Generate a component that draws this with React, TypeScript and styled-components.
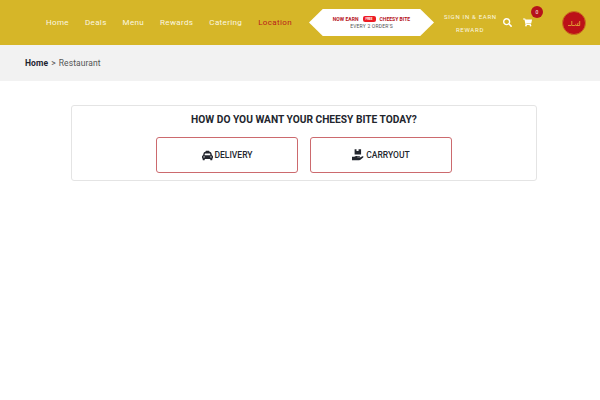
import { createGlobalStyle, styled } from 'styled-components';
import { FaSearch, FaShoppingCart, FaTaxi } from 'react-icons/fa';

const GlobalStyle = createGlobalStyle`
	html, body {
		margin: 0;
		padding: 0;
		background: #fff;
		font-family: Roboto, 'Liberation Sans', sans-serif;
	}
`;

const Page = styled.div`
	width: 600px;
	height: 400px;
	overflow: hidden;
`;

const Header = styled.header`
	display: flex;
	align-items: center;
	height: 45px;
	padding: 0 14px 0 46px;
	box-sizing: border-box;
	background: #d6b628;
`;

const Nav = styled.nav`
	display: flex;
	gap: 16px;
	width: 263px;
`;

const NavLink = styled.a<{ $active?: boolean }>`
	font-size: 8px;
	line-height: 12px;
	font-weight: 400;
	letter-spacing: 0.35px;
	white-space: nowrap;
	color: ${(p) => (p.$active ? '#b91c1c' : '#fbf6e0')};
`;

const Promo = styled.div`
	display: flex;
	flex-direction: column;
	align-items: center;
	justify-content: center;
	width: 125px;
	height: 27px;
	flex-shrink: 0;
	background: #fff;
	clip-path: polygon(0 50%, 11% 0, 89% 0, 100% 50%, 89% 100%, 11% 100%);
`;

const PromoTop = styled.div`
	display: flex;
	align-items: center;
	gap: 3px;
	font-size: 5px;
	line-height: 8px;
	font-weight: 700;
	letter-spacing: 0.03px;
	color: #b5121b;
	white-space: nowrap;
`;

const FreeTag = styled.span`
	display: inline-block;
	width: 13px;
	height: 6px;
	line-height: 6px;
	font-size: 3px;
	text-align: center;
	color: #fff;
	background: #ed1c24;
	border-radius: 2px;
	margin: 0 1px;
`;

const PromoBottom = styled.div`
	font-size: 5px;
	line-height: 7px;
	letter-spacing: 0.2px;
	color: #555;
`;

const SignIn = styled.a`
	width: 52px;
	margin-left: 10px;
	flex-shrink: 0;
	font-size: 6px;
	line-height: 13px;
	font-weight: 400;
	letter-spacing: 0.7px;
	text-align: center;
	white-space: nowrap;
	color: #fbf6e0;
`;

const IconButton = styled.span<{ $left: number }>`
	position: relative;
	display: flex;
	margin-left: ${(p) => p.$left}px;
	color: #fff;
	font-size: 9px;
`;

const Badge = styled.span`
	position: absolute;
	top: -12px;
	left: 8px;
	width: 12px;
	height: 12px;
	border-radius: 50%;
	background: #b5121b;
	color: #f5d5d5;
	font-size: 5px;
	font-weight: 500;
	line-height: 12px;
	text-align: center;
`;

const Logo = styled.div`
	display: flex;
	align-items: center;
	justify-content: center;
	width: 24px;
	height: 24px;
	margin-left: auto;
	box-sizing: border-box;
	border-radius: 50%;
	background: #bc1118;
	border: 1px solid #c9761f;
	color: #e8b93a;
`;

const Breadcrumb = styled.div`
	display: flex;
	align-items: center;
	gap: 3px;
	height: 36px;
	padding-left: 25px;
	background: #f2f2f2;
	font-size: 8.5px;
	letter-spacing: 0.1px;
	color: #555;
`;

const Crumb = styled.a`
	font-weight: 700;
	color: #1f2430;
`;

const Main = styled.main`
	padding: 24px 63px 0 71px;
`;

const Card = styled.section`
	display: flex;
	flex-direction: column;
	align-items: center;
	height: 76px;
	box-sizing: border-box;
	padding-top: 7px;
	border: 1px solid #e4e4e4;
	border-radius: 3px;
`;

const Title = styled.h2`
	margin: 0 0 11px;
	font-size: 10.2px;
	line-height: 13px;
	font-weight: 700;
	color: #23262e;
`;

const Options = styled.div`
	display: flex;
	gap: 12px;
`;

const OptionButton = styled.button`
	display: flex;
	align-items: center;
	justify-content: center;
	gap: 2px;
	width: 142px;
	height: 36px;
	padding: 0;
	background: #fff;
	border: 1px solid #cc6a6e;
	border-radius: 3px;
	font-family: inherit;
	font-size: 8.5px;
	font-weight: 500;
	color: #23262e;
	svg {
		font-size: 11px;
	}
`;

const HandBoxIcon = () => (
	<svg width="12" height="12" viewBox="0.5 0.5 11.5 11" fill="currentColor">
		<path d="M3 0.5h1.8v1.6h2V0.5h2.4v5H3z" />
		<path d="M0.5 7.6h2.2c1-.7 2-.8 3-.5h2c.6 0 .7 1 0 1H5.6v.4h2.6l2.3-1.2c.8-.3 1.3.5.7 1L8.6 10.6c-.4.3-.8.4-1.2.4H0.5z" />
	</svg>
);

const HalalMark = () => (
	<svg width="14" height="8" viewBox="0 0 14 8" fill="none" stroke="currentColor" strokeWidth="0.8">
		<path d="M1 6.5h3c.6 0 .8-.6.8-1.4V2M4.800 6.500h3c.7 0 .9-.7.9-1.600M8.700 6.500h4V2M11 6.500c-.8-1-.6-2.400.5-2.400" />
	</svg>
);

const links = ['Home', 'Deals', 'Menu', 'Rewards', 'Catering'];

export default function App() {
	return (
		<Page>
			<GlobalStyle />
			<Header>
				<Nav>
					{links.map((link) => (
						<NavLink key={link}>{link}</NavLink>
					))}
					<NavLink $active>Location</NavLink>
				</Nav>
				<Promo>
					<PromoTop>
						NOW EARN <FreeTag>FREE</FreeTag> CHEESY BITE
					</PromoTop>
					<PromoBottom>EVERY 2 ORDER'S</PromoBottom>
				</Promo>
				<SignIn>
					SIGN IN &amp; EARN
					<br />
					REWARD
				</SignIn>
				<IconButton $left={7}>
					<FaSearch />
				</IconButton>
				<IconButton $left={11}>
					<FaShoppingCart />
					<Badge>0</Badge>
				</IconButton>
				<Logo>
					<HalalMark />
				</Logo>
			</Header>
			<Breadcrumb>
				<Crumb>Home</Crumb>
				<span>&gt;</span>
				<span>Restaurant</span>
			</Breadcrumb>
			<Main>
				<Card>
					<Title>HOW DO YOU WANT YOUR CHEESY BITE TODAY?</Title>
					<Options>
						<OptionButton>
							<FaTaxi />
							DELIVERY
						</OptionButton>
						<OptionButton>
							<HandBoxIcon />
							CARRYOUT
						</OptionButton>
					</Options>
				</Card>
			</Main>
		</Page>
	);
}
